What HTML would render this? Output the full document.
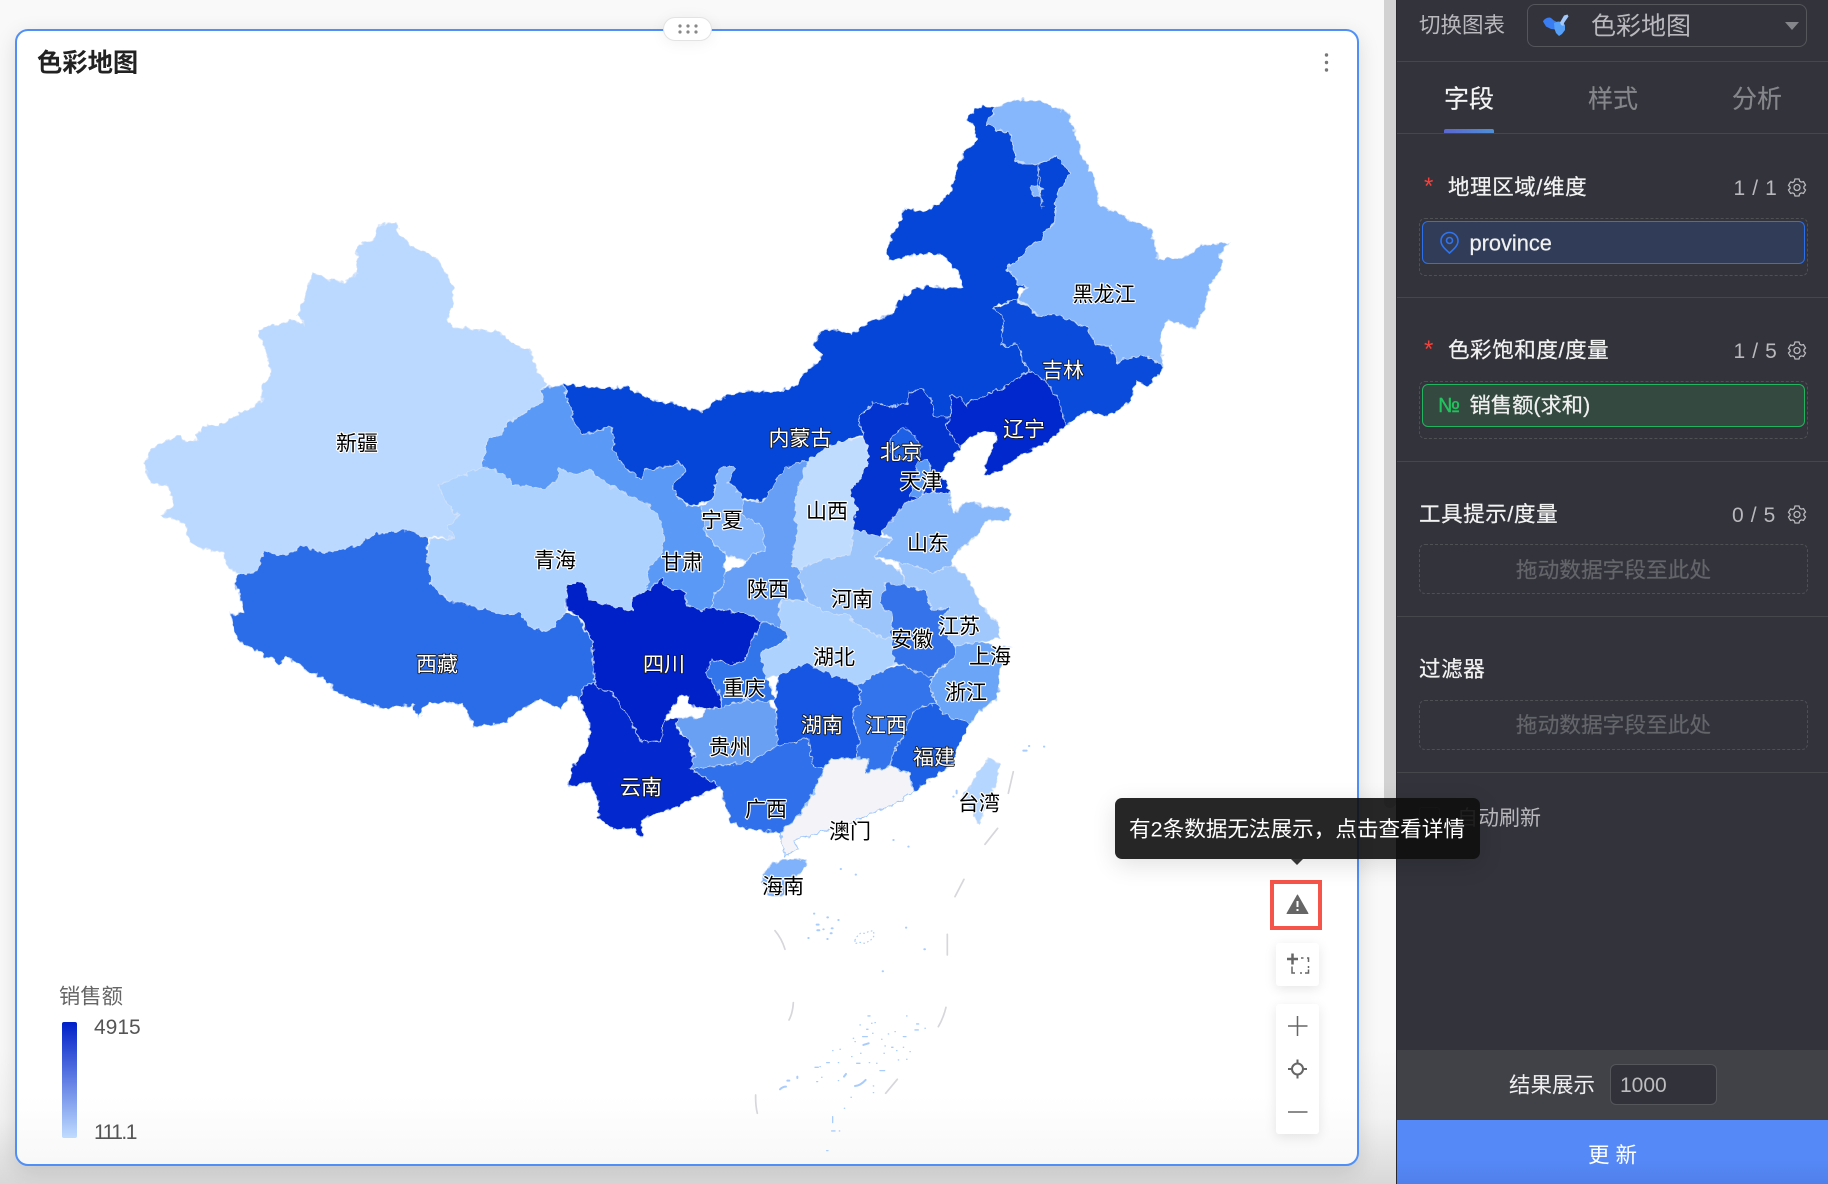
<!DOCTYPE html>
<html lang="zh"><head><meta charset="utf-8"><title>色彩地图</title>
<style>
*{box-sizing:border-box}
html,body{margin:0;padding:0}
body{width:1828px;height:1184px;position:relative;overflow:hidden;background:#f9f9f9;font-family:"Liberation Sans","Noto Sans CJK SC",sans-serif}
.a{position:absolute}
.t{position:absolute;white-space:nowrap;transform:translateY(calc(-50% + 1.5px));line-height:1.2}
#bgfade{left:0;top:1050px;width:1396px;height:134px;background:linear-gradient(#f9f9f9,#f2f2f2 50%,#d8d8d8)}
#card{left:15px;top:29px;width:1344px;height:1137px;border:2px solid #4f8ff7;border-radius:13px;background:linear-gradient(#fff 0,#fff 94%,#f8f8f8 100%);box-shadow:0 6px 22px rgba(0,0,0,.12)}
#scroll{left:1384px;top:0;width:12px;height:808px;background:#d2d2d2;border-radius:0 0 6px 6px}
#side{left:1396px;top:0;width:432px;height:1184px;background:#32333b;border-left:1px solid #2a2a2e}
.l{position:absolute;left:1397px;width:431px;height:1px;background:#46474d}
.ds{position:absolute;left:1419px;width:389px;border:1px dashed #4f5056;border-radius:6px}
.lb{color:#f2f2f2;font-size:21.500px;letter-spacing:.6px;-webkit-text-stroke:.25px #f2f2f2}
.c{color:#b9b9bd;font-size:21px;letter-spacing:.6px}
.ph{color:#64656b;font-size:21.700px;width:389px;left:1419px;text-align:center;-webkit-text-stroke:.2px #64656b}
.tab{font-size:25px;color:#85868b;-webkit-text-stroke:.2px}
svg text.m{font-family:"Liberation Sans","Noto Sans CJK SC",sans-serif;font-size:21px;text-anchor:middle;dominant-baseline:central;paint-order:stroke;stroke-linejoin:round}
svg text.d{fill:#000;stroke:#fff;stroke-width:2.2px}
svg text.w{fill:#fff;stroke:#111;stroke-width:1.6px}
polygon{stroke:#d3e3fb;stroke-width:1;stroke-opacity:.75;vector-effect:non-scaling-stroke}
.btn{position:absolute;left:1276px;width:43px;background:#fff;border-radius:3px;box-shadow:0 3px 12px rgba(0,0,0,.1)}
</style></head><body>
<div class="a" id="bgfade"></div>
<div class="a" id="card"></div>
<div class="t" style="left:37px;top:62px;font-size:25.300px;font-weight:700;color:#222">色彩地图</div>
<div class="a" style="left:663px;top:17px;width:49px;height:24px;background:#fff;border:1px solid #e3e3e3;border-radius:12px;box-shadow:0 2px 16px rgba(0,0,0,.06)"></div>
<svg class="a" style="left:0;top:0" width="1828" height="1184"><g fill="#888"><circle cx="680" cy="26" r="1.6"/><circle cx="688" cy="26" r="1.6"/><circle cx="696" cy="26" r="1.6"/><circle cx="680" cy="32" r="1.6"/><circle cx="688" cy="32" r="1.6"/><circle cx="696" cy="32" r="1.6"/></g>
<g fill="#777"><circle cx="1326.500" cy="55" r="1.7"/><circle cx="1326.500" cy="62.500" r="1.7"/><circle cx="1326.500" cy="70" r="1.7"/></g></svg>

<svg class="a" style="left:0;top:0" width="1828" height="1184">
<defs><filter id="j" x="0" y="0" width="100%" height="100%" filterUnits="userSpaceOnUse" primitiveUnits="userSpaceOnUse" color-interpolation-filters="sRGB"><feTurbulence type="fractalNoise" baseFrequency=".16" numOctaves="2" seed="4" result="n"/><feDisplacementMap in="SourceGraphic" in2="n" scale="7" xChannelSelector="R" yChannelSelector="G"/></filter></defs>
<g filter="url(#j)">
<g transform="translate(600,80) scale(.42088,.5102)">
<polygon fill="#5a99f5" points="-281,760 -267,702 -232,695 -220,670 -173,650 -136,630 -140,605 -89,597 -65,650 -70,660 -42,695 24,682 38,700 29,725 66,765 99,782 104,765 151,760 188,750 205,765 170,800 207,835 240,835 255,895 300,930 295,965 295,990 270,1010 265,1035 240,1040 205,1030 205,1005 160,995 146,975 118,1000 76,1020 60,975 60,900"/>
<polygon fill="#0545d8" points="-89,597 15,605 62,600 109,622 146,630 184,638 240,650 280,628 330,612 430,610 465,598 490,570 528,548 507,520 525,490 560,490 595,500 640,475 700,458 712,430 760,405 862,408 855,380 810,340 770,342 725,345 690,355 680,330 705,290 725,250 775,258 830,225 840,195 865,140 895,120 890,90 868,78 900,52 938,55 918,88 945,98 975,105 990,160 1040,165 1085,148 1115,185 1085,225 1080,280 1055,300 1050,315 1030,320 968,370 995,400 1015,405 995,410 990,430 945,440 935,448 955,465 955,520 995,518 1010,560 1020,570 965,600 880,630 870,640 855,620 835,620 835,660 795,660 790,630 765,605 735,615 730,635 680,640 650,630 615,660 625,695 570,710 540,720 495,745 470,760 400,815 385,825 340,820 320,800 305,790 320,760 300,755 278,770 265,825 210,835 170,800 205,765 188,750 151,760 104,765 99,782 66,765 29,725 38,700 24,682 -42,695 -70,660 -65,650"/>
</g>
<g transform="translate(100,80) scale(.39541,.5102)">
<polygon fill="#bbd9fe" points="705,285 750,278 755,300 790,328 850,348 870,375 893,405 890,440 878,470 890,482 960,490 1010,495 1060,525 1088,528 1105,570 1132,598 1115,605 1120,630 1080,650 1030,670 1018,695 980,702 965,760 855,795 875,825 905,855 880,875 895,898 860,895 830,897 775,882 690,890 660,910 610,920 570,928 510,912 470,932 415,925 395,965 350,968 322,955 310,925 280,922 230,908 215,870 155,852 185,835 172,795 130,790 112,752 128,725 170,708 205,695 212,710 245,705 258,678 300,678 350,655 410,630 408,600 435,578 420,530 398,490 480,472 515,478 502,460 538,378 580,392 620,395 652,378 648,325 695,310"/>
<polygon fill="#aed2fe" points="855,795 965,760 990,762 1020,772 1050,795 1085,795 1125,803 1155,785 1158,760 1200,772 1235,765 1290,795 1340,815 1385,830 1412,855 1428,895 1422,925 1380,965 1390,985 1370,1015 1345,1012 1345,1040 1300,1035 1240,1020 1222,985 1180,985 1180,1040 1145,1075 1120,1080 1090,1075 1060,1042 1020,1048 960,1035 880,1020 840,990 825,935 835,900 895,898 880,875 905,855 875,825"/>
<polygon fill="#2b6ce9" points="415,925 470,932 510,912 570,928 610,920 660,910 690,890 775,882 830,897 825,935 840,990 880,1020 960,1035 1020,1048 1060,1042 1090,1075 1120,1080 1145,1075 1175,1045 1205,1050 1245,1100 1250,1180 1225,1190 1212,1215 1190,1205 1165,1232 1110,1215 1060,1235 1015,1262 945,1268 918,1225 830,1220 805,1250 790,1225 720,1232 670,1222 630,1210 590,1195 570,1175 520,1155 470,1130 455,1145 410,1125 350,1100 330,1045 365,1045 342,985 350,968 395,965"/>
</g>
<g transform="translate(600,80) scale(.42088,.5102)">
<polygon fill="#0020c8" points="-79,985 -40,985 -23,1020 76,1040 76,1012 118,1000 146,975 160,995 205,1005 205,1030 240,1040 265,1035 340,1045 385,1060 365,1095 340,1140 310,1145 265,1135 250,1160 280,1195 290,1230 250,1235 212,1225 212,1205 193,1205 151,1255 146,1295 99,1298 62,1240 29,1200 -4,1195 -14,1180 -18,1100 -47,1055 -79,1035"/>
<polygon fill="#0329ce" points="-14,1180 -4,1195 29,1200 62,1240 99,1298 146,1295 151,1255 185,1250 180,1270 210,1295 225,1330 215,1350 285,1385 225,1405 185,1425 130,1440 100,1450 100,1485 76,1465 33,1470 -6,1445 -2,1415 -23,1380 -75,1385 -70,1350 -28,1305 -25,1260 -49,1215 -37,1190"/>
<polygon fill="#86b6fb" points="918,88 938,55 1000,38 1060,45 1110,65 1135,115 1145,150 1175,190 1185,245 1240,265 1310,295 1325,350 1385,350 1430,325 1495,318 1470,345 1480,365 1450,400 1435,450 1410,488 1350,470 1330,500 1338,565 1300,540 1250,545 1230,555 1210,520 1180,520 1155,485 1100,465 1040,460 995,430 990,430 1015,405 995,400 968,370 1030,320 1050,315 1055,300 1080,280 1085,225 1115,185 1085,148 1040,165 990,160 975,105 945,98"/>
<polygon fill="#86b6fb" points="1022,210 1040,205 1052,215 1045,228 1028,225"/>
<polygon fill="none" points="1042,165 1040,205 1050,240 1052,250"/>
<polygon fill="#0a4bdc" points="935,448 990,430 1040,460 1100,465 1155,485 1180,520 1210,520 1230,555 1250,545 1300,540 1338,565 1305,600 1275,590 1260,630 1205,660 1155,650 1105,680 1090,630 1060,590 1020,570 1010,560 995,518 955,520 955,465"/>
<polygon fill="#0028cc" points="1020,570 1060,590 1090,630 1105,680 1060,710 1000,735 960,760 910,778 920,745 945,695 915,690 880,700 855,722 820,680 835,660 835,620 855,620 870,640 880,630 965,600"/>
<polygon fill="#0334d0" points="615,660 650,630 680,640 730,635 735,615 765,605 790,630 795,660 835,660 820,680 855,722 835,745 810,770 835,810 775,810 725,830 690,870 670,885 665,895 600,880 610,840 595,805 625,770 640,740 625,695"/>
<polygon fill="#1d5fe5" points="690,700 720,680 750,700 765,720 760,740 720,745 690,730"/>
<polygon fill="#5a99f5" points="755,745 780,745 790,775 765,815 735,815 745,790"/>
<polygon fill="#bfdcff" points="625,700 640,740 625,770 595,805 610,840 600,880 595,930 530,940 470,960 455,950 470,880 462,860 470,800 495,745 540,720 570,710"/>
<polygon fill="#89b8fb" points="670,885 725,830 775,810 835,810 830,830 840,850 870,825 910,835 975,840 970,865 920,865 880,905 840,930 835,950 790,965 740,950 710,945 650,935 695,900"/>
<polygon fill="#9cc5fc" points="600,880 665,895 695,900 650,935 710,958 725,990 680,985 665,1025 695,1050 690,1095 660,1090 610,1065 590,1050 540,1045 490,1020 470,960 530,940 595,930"/>
<polygon fill="#669ff5" points="495,745 470,800 462,860 470,880 455,950 470,960 490,1020 430,1020 425,1050 430,1075 385,1060 340,1045 265,1035 270,1010 295,990 295,965 350,945 360,930 390,925 390,880 335,850 335,825 390,825 400,810 440,760"/>
<polygon fill="#86b6fb" points="280,765 300,755 320,760 305,790 320,800 340,820 335,850 390,880 390,925 360,930 350,945 300,930 250,890 240,835 265,825"/>
<polygon fill="#3274ea" points="385,1060 430,1075 450,1095 380,1125 415,1215 400,1220 340,1215 290,1230 280,1195 250,1160 265,1135 310,1145 340,1140 365,1095"/>
<polygon fill="#6aa0f3" points="185,1250 240,1250 250,1235 290,1230 340,1215 400,1220 420,1240 420,1285 425,1305 360,1335 285,1345 215,1350 225,1320 210,1295 180,1265"/>
<polygon fill="#3070ea" points="215,1350 285,1345 360,1335 425,1305 495,1290 505,1340 530,1350 505,1400 470,1445 430,1475 360,1470 310,1455 285,1385"/>
<polygon fill="#aed2fe" points="430,1020 490,1020 540,1045 590,1050 610,1065 660,1090 690,1095 700,1145 675,1155 615,1185 600,1180 545,1165 490,1145 425,1165 395,1175 380,1125 450,1095 430,1075 425,1050"/>
<polygon fill="#1656e2" points="425,1165 490,1145 545,1165 600,1180 615,1185 620,1215 597,1240 615,1290 610,1330 550,1330 530,1350 505,1340 495,1290 425,1305 420,1285 420,1240 415,1215"/>
<polygon fill="#3374ec" points="615,1185 675,1155 720,1145 750,1160 790,1170 782,1190 800,1220 745,1235 725,1280 695,1320 690,1345 630,1358 640,1330 610,1330 615,1290 597,1240 620,1215"/>
<polygon fill="#3473ea" points="680,985 725,990 775,1000 790,1040 830,1035 805,1075 845,1110 840,1130 785,1170 750,1160 720,1145 700,1145 690,1095 695,1050 665,1025"/>
<polygon fill="#a0c8fd" points="710,945 740,950 790,965 835,950 870,970 905,1030 945,1065 950,1095 900,1100 845,1110 805,1075 830,1035 790,1040 775,1000 725,990"/>
<polygon fill="#6ba5f7" points="845,1110 900,1100 975,1115 950,1155 945,1210 900,1240 880,1260 815,1245 800,1220 782,1190 790,1170 840,1130"/>
<polygon fill="#1d5fe5" points="800,1220 815,1245 880,1260 850,1305 840,1340 745,1395 735,1360 690,1345 695,1320 725,1280 745,1235"/>
<polygon fill="#f4f4f8" style="stroke:#9cc5fc;stroke-opacity:1" points="530,1350 550,1330 610,1330 640,1330 630,1358 690,1345 735,1360 745,1395 700,1420 640,1440 580,1460 500,1480 460,1490 470,1510 440,1520 430,1490 430,1475 470,1445 505,1400"/>
</g>
<g transform="translate(740,720) scale(.3333)">
<polygon fill="#7fb2fb" points="68,465 95,430 130,418 200,420 190,445 160,490 125,525 85,525 65,490"/>
<polygon fill="#b5d6fe" points="720,150 750,115 778,130 768,190 735,270 715,315 705,290 680,250 660,240 690,195"/>
</g>
</g>
<g transform="translate(740,720) scale(.3333)">
<g fill="none" stroke="#d6d6db" stroke-width="5" stroke-linecap="round"><path d="M820 155L805 220M773 325L735 373M672 478L645 530M622 643V705M618 862Q610 895 595 920M472 1078L437 1120M47 1125Q46 1155 52 1180M160 848Q158 880 147 900M105 632Q125 655 135 688"/></g>
<g fill="none" stroke="#a9ccfd" stroke-width="6" stroke-linecap="round"><path d="M850 92h10M867 78h1M912 80h1M650 212v8M640 230h1M460 360h1M505 380h1M302 447h1M347 464h1M222 581h1M262 592h2M230 614h6M232 631h6M250 628h1M275 625h3M272 640h3M262 657h1M205 654h1M295 600h1M498 623h1M553 688h2M428 754h1"/><path stroke-width="3.500" stroke-dasharray="2 10" d="M345 660l6-10 10-10h14l10-5l15-3 3 15-12 15-18 8-14-3-14 4z"/><path stroke-width="4" d="M384 888h6M360 915h1M395 910h1M405 908h1M380 928h4M368 950h14M345 965h1M425 958h1M445 942h1M490 950h8M525 930h10M555 925h1M530 912h6M500 888h1M435 978h1M455 982h4M470 992h1M490 982h1M475 1020h1M500 1018h1M278 992h1M300 988h1M260 1028h8M225 1042h10M295 1028h1M335 1010h1M350 1030h10M388 1028h1M420 1052h14M245 1072h1M295 1082h1M230 1085h3M400 1098h1M400 1118h1M333 1132h1M313 1165h1M278 1190v18M275 1233h10M298 1233h1M260 1292h4M340 955h1M398 940h1M465 935h1M510 995h1M432 1000h1M362 1000h1M410 1030h1M240 1040h1"/><path stroke-width="6" d="M370 975l16-5M318 1062l-6 8M345 1098q15 0 32-18M120 1108q8-8 18-8M142 1082h6M172 1070v4"/></g>
</g>
<g transform="translate(0,1.200)">
<text class="m d" x="357" y="443">新疆</text><text class="m d" x="555" y="560">青海</text><text class="m w" x="437" y="664">西藏</text><text class="m w" x="664" y="664">四川</text><text class="m w" x="641" y="787">云南</text><text class="m d" x="682" y="562">甘肃</text><text class="m d" x="722" y="520">宁夏</text><text class="m w" x="800" y="438">内蒙古</text><text class="m d" x="827" y="511">山西</text><text class="m d" x="768" y="589">陕西</text><text class="m w" x="901" y="452">北京</text><text class="m d" x="921" y="481">天津</text><text class="m w" x="1024" y="429">辽宁</text><text class="m w" x="1063" y="370">吉林</text><text class="m d" x="1104" y="294">黑龙江</text><text class="m d" x="928" y="543">山东</text><text class="m d" x="852" y="599">河南</text><text class="m d" x="959" y="626">江苏</text><text class="m d" x="912" y="639">安徽</text><text class="m d" x="990" y="656">上海</text><text class="m d" x="834" y="657">湖北</text><text class="m d" x="744" y="688">重庆</text><text class="m d" x="966" y="692">浙江</text><text class="m w" x="822" y="725">湖南</text><text class="m w" x="886" y="725">江西</text><text class="m d" x="730" y="747">贵州</text><text class="m w" x="934" y="757">福建</text><text class="m d" x="766" y="809">广西</text><text class="m d" x="979" y="803">台湾</text><text class="m d" x="850" y="831">澳门</text><text class="m d" x="783" y="886">海南</text>
</g>
</svg>

<div class="t" style="left:59px;top:996px;font-size:21.300px;color:#666">销售额</div>
<div class="a" style="left:62px;top:1022px;width:15px;height:116px;border-radius:2px;background:linear-gradient(#0020c8,#c0dcff)"></div>
<div class="t" style="left:94px;top:1025.500px;font-size:21px;color:#555">4915</div>
<div class="t" style="left:94px;top:1130.500px;font-size:21px;color:#555;letter-spacing:-1.500px">111.1</div>

<div class="a" id="scroll"></div>
<div class="a" id="side"></div>

<div class="t" style="left:1419px;top:25px;font-size:21.500px;color:#b9b9bd">切换图表</div>
<div class="a" style="left:1527px;top:4px;width:280px;height:43px;border:1px solid #55565c;border-radius:8px"></div>
<svg class="a" style="left:1543px;top:13px" width="26" height="24" viewBox="0 0 26 24"><path fill="#3a7df2" d="M0 8.500C1 6 4 4.500 6.500 4.500C8 4.500 9 6 11 7.500L14 9 15 14 13 16.500 8 16 3 13.500Z"/><path fill="#57a0f8" d="M11 10 15 8.500 19 9 22 12 22 17 19 21 16 23 13 20 11.500 16Z"/><path fill="#a4c8fa" d="M17 9.500 19 6 21 2.500 24.500 1.500 25.500 3.500 23 7 21 10 20.500 13 18 12Z"/></svg>
<div class="t" style="left:1591px;top:25px;font-size:25px;color:#b9b9bd">色彩地图</div>
<div class="a" style="left:1785px;top:22px;width:0;height:0;border-left:7.500px solid transparent;border-right:7.500px solid transparent;border-top:8px solid #85868b"></div>
<div class="l" style="top:61px"></div>

<div class="t tab" style="left:1444px;top:98px;color:#f4f4f4">字段</div>
<div class="t tab" style="left:1588px;top:98px">样式</div>
<div class="t tab" style="left:1732px;top:98px">分析</div>
<div class="a" style="left:1444px;top:129px;width:50px;height:4px;border-radius:2px 2px 0 0;background:linear-gradient(90deg,#5b67d0,#4e8fd6)"></div>
<div class="l" style="top:133px"></div>

<div class="t" style="left:1424px;top:186px;font-size:24px;color:#f5403a">*</div>
<div class="t lb" style="left:1448px;top:187px">地理区域/维度</div>
<div class="t c" style="left:1733.500px;top:186.500px">1 / 1</div>
<div class="ds" style="top:218px;height:58px"></div>
<div class="a" style="left:1422px;top:221px;width:383px;height:43px;background:#303c58;border:1px solid #2d6fe8;border-radius:6px"></div>
<svg class="a" style="left:1439px;top:231px" width="21" height="24" viewBox="0 0 21 24" fill="none" stroke="#2f74ee" stroke-width="1.600"><path d="M10.500 22C6 18 2 14.500 2 10A8.500 8.500 0 0 1 19 10C19 14.500 15 18 10.500 22Z"/><circle cx="10.500" cy="9.500" r="3"/></svg>
<div class="t" style="left:1469.500px;top:241.500px;font-size:21.800px;color:#f0f0f0;-webkit-text-stroke:.25px #f0f0f0">province</div>
<div class="l" style="top:297px"></div>

<div class="t" style="left:1424px;top:349px;font-size:24px;color:#f5403a">*</div>
<div class="t lb" style="left:1448px;top:350px">色彩饱和度/度量</div>
<div class="t c" style="left:1733.500px;top:350px">1 / 5</div>
<div class="ds" style="top:381px;height:58px"></div>
<div class="a" style="left:1422px;top:384px;width:383px;height:43px;background:#34493f;border:1px solid #22b35e;border-radius:6px"></div>
<div class="t" style="left:1438px;top:405px;font-size:20.500px;color:#22c25e;-webkit-text-stroke:.4px #22c25e">№</div>
<div class="t" style="left:1469.500px;top:405px;font-size:21.300px;color:#f0f0f0;-webkit-text-stroke:.25px #f0f0f0">销售额(求和)</div>
<div class="l" style="top:461px"></div>

<div class="t lb" style="left:1419px;top:514px">工具提示/度量</div>
<div class="t c" style="left:1732px;top:514px">0 / 5</div>
<div class="ds" style="top:544px;height:50px"></div>
<div class="t ph" style="top:569px">拖动数据字段至此处</div>
<div class="l" style="top:616px"></div>
<div class="t lb" style="left:1419px;top:669px">过滤器</div>
<div class="ds" style="top:700px;height:50px"></div>
<div class="t ph" style="top:724px">拖动数据字段至此处</div>
<div class="l" style="top:772px"></div>
<div class="a" style="left:1419px;top:807px;width:21px;height:20px;border:1px solid #55565c;border-radius:3px"></div>
<div class="t" style="left:1457px;top:817px;font-size:21px;color:#b9b9bd">自动刷新</div>

<svg class="a" style="left:0;top:0" width="1828" height="1184" fill="none" stroke="#b9b9bd" stroke-width="1.300">
<path transform="translate(1788,178)" d="M7 1h4l.7 2.200 1.500.9 2.300-.5 2 3.400-1.600 1.700v1.600l1.600 1.700-2 3.400-2.300-.5-1.500.9L11 18H7l-.7-2.200-1.500-.9-2.300.5-2-3.400 1.600-1.700V9.100L.5 7.400l2-3.400 2.300.5 1.500-.9z"/><circle cx="1797" cy="187.500" r="3"/>
<path transform="translate(1788,341)" d="M7 1h4l.7 2.200 1.500.9 2.300-.5 2 3.400-1.600 1.700v1.600l1.600 1.700-2 3.400-2.300-.5-1.500.9L11 18H7l-.7-2.200-1.500-.9-2.300.5-2-3.400 1.600-1.700V9.100L.5 7.400l2-3.400 2.300.5 1.500-.9z"/><circle cx="1797" cy="350.500" r="3"/>
<path transform="translate(1788,505)" d="M7 1h4l.7 2.200 1.500.9 2.300-.5 2 3.400-1.600 1.700v1.600l1.600 1.700-2 3.400-2.300-.5-1.500.9L11 18H7l-.7-2.200-1.500-.9-2.300.5-2-3.400 1.600-1.700V9.100L.5 7.400l2-3.400 2.300.5 1.500-.9z"/><circle cx="1797" cy="514.500" r="3"/>
</svg>

<div class="a" style="left:1397px;top:1050px;width:431px;height:70px;background:#414248"></div>
<div class="t" style="left:1509px;top:1085px;font-size:21.500px;color:#f0f0f0">结果展示</div>
<div class="a" style="left:1610px;top:1064px;width:107px;height:41px;background:#32333a;border:1px solid #55565c;border-radius:6px"></div>
<div class="t" style="left:1620px;top:1084px;font-size:21px;color:#bdbdc0">1000</div>
<div class="a" style="left:1397px;top:1120px;width:431px;height:64px;background:linear-gradient(#5689f8,#5689f8 60%,#5080ea)"></div>
<div class="t" style="left:1397px;width:431px;text-align:center;top:1155px;font-size:21.500px;color:#fff">更 新</div>

<div class="a" style="left:1270px;top:880px;width:52px;height:50px;background:#fff;border:4px solid #f5544a"></div>
<div class="btn" style="top:943px;height:43px"></div>
<div class="btn" style="top:1004px;height:130px"></div>
<svg class="a" style="left:0;top:0" width="1828" height="1184">
<path fill="#666" d="M1297.500 895L1308 913.500H1287Z" stroke="#666" stroke-width="1" stroke-linejoin="round"/>
<path stroke="#fff" stroke-width="2" d="M1297.500 901v6M1297.500 909v2"/>
<path stroke="#666" stroke-width="2.500" fill="none" d="M1287 959h11M1292.500 953.500v11"/>
<path stroke="#666" stroke-width="1.500" fill="none" d="M1301 958h2.500v0M1307 958h0M1307 958h1.500v4M1308.500 966v2M1308.500 969.500V973H1305M1300 973h2M1292 966.500V973h3"/>
<path stroke="#666" stroke-width="1.500" fill="none" d="M1288 1026h19.500M1297.500 1016v20M1288 1112h19.500"/>
<circle cx="1297.500" cy="1069" r="5.500" fill="none" stroke="#666" stroke-width="2"/>
<path stroke="#666" stroke-width="2" d="M1297.500 1059.500v4M1297.500 1074.500v4M1288 1069h4M1303 1069h4"/>
</svg>

<div class="a" style="left:1115px;top:798px;width:365px;height:61px;background:rgba(14,14,14,.9);border-radius:7px;box-shadow:0 6px 24px rgba(0,0,0,.12)"></div>
<div class="a" style="left:1291px;top:859px;width:0;height:0;border-left:6px solid transparent;border-right:6px solid transparent;border-top:6px solid #333"></div>
<div class="t" style="left:1129px;top:828px;font-size:21.600px;color:#fff">有2条数据无法展示，点击查看详情</div>
</body></html>
